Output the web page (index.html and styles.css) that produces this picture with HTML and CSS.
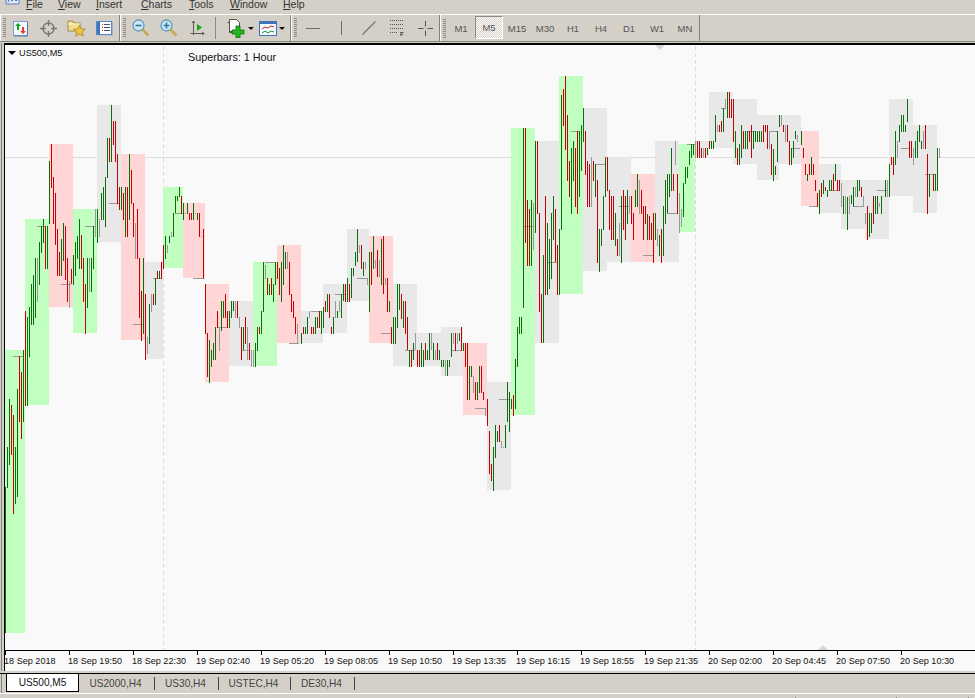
FILE: index.html
```html
<!DOCTYPE html>
<html lang="en">
<head>
    <meta charset="UTF-8">
    <title>US500,M5</title>
    <link rel="stylesheet" href="styles.css">
</head>
<body>
    <nav class="menubar">
        <svg class="app-icon" width="16" height="14" viewBox="0 0 16 14">
            <path d="M1 0h13v9H1z" fill="#dfe8f8" stroke="#5a7fc0"/>
            <path d="M3 7l2-4 2 3 2-4 2 4 2-2" fill="none" stroke="#3a64b0"/>
        </svg>
        <span class="menu-item menu-file"><u>F</u>ile</span>
        <span class="menu-item menu-view"><u>V</u>iew</span>
        <span class="menu-item menu-insert"><u>I</u>nsert</span>
        <span class="menu-item menu-charts"><u>C</u>harts</span>
        <span class="menu-item menu-tools"><u>T</u>ools</span>
        <span class="menu-item menu-window"><u>W</u>indow</span>
        <span class="menu-item menu-help"><u>H</u>elp</span>
    </nav>

    <div class="toolbar">
        <div class="tool-group group-main">
            <span class="grip"></span>
            <button class="tool" aria-label="New Chart">
                <svg width="17" height="17" viewBox="0 0 17 17">
                    <rect x="1.5" y="1.5" width="14" height="14" fill="#f4f8fe" stroke="#7d9fd0"/>
                    <path d="M15.5 2v14H2" fill="none" stroke="#4f78b4"/>
                    <path d="M6 3l3 3H7v4H5V6H3z" fill="#18a018"/>
                    <path d="M11 14l3-3h-2V7h-2v4H8z" fill="#e04028"/>
                </svg>
            </button>
            <button class="tool" aria-label="Crosshair">
                <svg width="17" height="17" viewBox="0 0 17 17" fill="none" stroke="#77756f">
                    <circle cx="8.5" cy="8.5" r="5.5" stroke-width="1.4"/>
                    <path d="M8.5 0v6M8.5 11v6M0 8.5h6M11 8.5h6" stroke-width="1.4"/>
                </svg>
            </button>
            <button class="tool" aria-label="Market Watch">
                <svg width="19" height="18" viewBox="0 0 19 18">
                    <path d="M1 2h5l1 2h6v8H1z" fill="#f4de8a" stroke="#9a8a50"/>
                    <path d="M1 5h12" stroke="#fff6c8"/>
                    <path d="M12.500 6l1.700 3.800 4.300.4-3.200 2.800 1 4.200-3.800-2.300-3.800 2.300 1-4.200-3.200-2.800 4.300-.4z" fill="#f0c040" stroke="#a08020" stroke-width=".7"/>
                </svg>
            </button>
            <button class="tool" aria-label="Navigator">
                <svg width="17" height="16" viewBox="0 0 17 16">
                    <rect x=".5" y="1.500" width="15" height="13" fill="#fff" stroke="#5c86c4"/>
                    <rect x="1" y="2" width="3" height="12" fill="#3f74c4"/>
                    <path d="M6 4.500h1M6 7.500h1M6 10.500h1" stroke="#c83020"/>
                    <path d="M8 4.500h6M8 7.500h6M8 10.500h6" stroke="#40506c"/>
                    <path d="M16.500 2v14H1" fill="none" stroke="#9db4d4"/>
                </svg>
            </button>
        </div>

        <div class="tool-group group-zoom">
            <span class="grip"></span>
            <button class="tool" aria-label="Zoom Out">
                <svg width="18" height="18" viewBox="0 0 18 18">
                    <circle cx="6.500" cy="6.500" r="5.500" fill="#cfe6f4" stroke="#5f9cc0" stroke-width="1.300"/>
                    <path d="M3.500 6.500h6" stroke="#2d77a8" stroke-width="1.600"/>
                    <path d="M10.500 10.500l6 6" stroke="#c8a850" stroke-width="2.600"/>
                </svg>
            </button>
            <button class="tool" aria-label="Zoom In">
                <svg width="18" height="18" viewBox="0 0 18 18">
                    <circle cx="6.500" cy="6.500" r="5.500" fill="#cfe6f4" stroke="#5f9cc0" stroke-width="1.300"/>
                    <path d="M3.500 6.500h6M6.500 3.500v6" stroke="#2d77a8" stroke-width="1.600"/>
                    <path d="M10.500 10.500l6 6" stroke="#c8a850" stroke-width="2.600"/>
                </svg>
            </button>
            <button class="tool" aria-label="Chart Shift">
                <svg width="15" height="17" viewBox="0 0 15 17">
                    <path d="M3.500 1v14M.500 13.500h14M2 3l1.500-2L5 3M12 12l2 1.500-2 1.500" fill="none" stroke="#5c5a54"/>
                    <path d="M7 4l5 3.500L7 11z" fill="#1aa51a"/>
                </svg>
            </button>
            <span class="tool-sep"></span>
            <button class="tool tool-menu" aria-label="New Order">
                <svg width="20" height="20" viewBox="0 0 20 20">
                    <path d="M3.500 1.500h7l3 3v9h-10z" fill="#fff" stroke="#55534e"/>
                    <path d="M1.500 4.500h2v10h3" fill="none" stroke="#55534e"/>
                    <path d="M10 8h4v4h4v4h-4v4h-4v-4H6v-4h4z" fill="#22b822" stroke="#0a6a0a" stroke-width=".8"/>
                </svg>
                <span class="drop-arrow"></span>
            </button>
            <button class="tool tool-menu" aria-label="Indicators">
                <svg width="18" height="15" viewBox="0 0 18 15">
                    <rect x=".5" y=".5" width="17" height="14" fill="#f4f8fe" stroke="#3f74b8"/>
                    <rect x="1" y="1" width="16" height="2" fill="#3f74b8"/>
                    <path d="M3 8l3-2 3 1 3-2 3 1" fill="none" stroke="#c03020"/>
                    <path d="M3 12l3-2 3 2 3-2 3 1" fill="none" stroke="#209030"/>
                </svg>
                <span class="drop-arrow"></span>
            </button>
        </div>

        <div class="tool-group group-lines">
            <span class="grip"></span>
            <button class="tool" aria-label="Horizontal Line">
                <svg width="14" height="3" viewBox="0 0 14 3"><path d="M0 1.500h14" stroke="#6e6c66"/></svg>
            </button>
            <button class="tool" aria-label="Vertical Line">
                <svg width="3" height="14" viewBox="0 0 3 14"><path d="M1.500 0v14" stroke="#6e6c66"/></svg>
            </button>
            <button class="tool" aria-label="Trendline">
                <svg width="14" height="14" viewBox="0 0 14 14"><path d="M.5 13.500l13-13" stroke="#77756f" stroke-width="1.200"/></svg>
            </button>
            <button class="tool" aria-label="Fibonacci">
                <svg width="14" height="16" viewBox="0 0 14 16">
                    <path d="M0 .500h13M0 4.500h13M0 8.500h13M0 12.500h8" stroke="#55534e" stroke-dasharray="1 1"/>
                    <text class="fib-mark" x="10" y="16">F</text>
                </svg>
            </button>
            <button class="tool" aria-label="Cursor">
                <svg width="15" height="15" viewBox="0 0 15 15"><path d="M0 7.500h5.500M9.500 7.500H15M7.500 0v5.500M7.500 9.500V15" stroke="#55534e"/><path d="M7 7h1v1H7z" fill="#b0aea8"/></svg>
            </button>
        </div>

        <div class="tool-group group-periods">
            <span class="grip grip-striped"></span>
            <button class="period">M1</button>
            <button class="period period-active">M5</button>
            <button class="period">M15</button>
            <button class="period">M30</button>
            <button class="period">H1</button>
            <button class="period">H4</button>
            <button class="period">D1</button>
            <button class="period">W1</button>
            <button class="period">MN</button>
        </div>
    </div>

    <main class="chart-window">
        <div class="chart-area">
            <svg id="chart" class="chart-svg" width="970" height="605" viewBox="5 45 970 605"></svg>
            <div class="chart-title"><span class="title-arrow"></span>US500,M5</div>
            <div class="chart-note">Superbars: 1 Hour</div>
            <span class="marker marker-top"></span>
            <span class="marker marker-bottom"></span>
        </div>
        <div class="time-axis">
            <div class="tick"><span>18 Sep 2018</span></div>
            <div class="tick"><span>18 Sep 19:50</span></div>
            <div class="tick"><span>18 Sep 22:30</span></div>
            <div class="tick"><span>19 Sep 02:40</span></div>
            <div class="tick"><span>19 Sep 05:20</span></div>
            <div class="tick"><span>19 Sep 08:05</span></div>
            <div class="tick"><span>19 Sep 10:50</span></div>
            <div class="tick"><span>19 Sep 13:35</span></div>
            <div class="tick"><span>19 Sep 16:15</span></div>
            <div class="tick"><span>19 Sep 18:55</span></div>
            <div class="tick"><span>19 Sep 21:35</span></div>
            <div class="tick"><span>20 Sep 02:00</span></div>
            <div class="tick"><span>20 Sep 04:45</span></div>
            <div class="tick"><span>20 Sep 07:50</span></div>
            <div class="tick"><span>20 Sep 10:30</span></div>
        </div>
    </main>

    <div class="tabs">
        <div class="tab tab-active">US500,M5</div>
        <div class="tab tab-us2000">US2000,H4</div>
        <div class="tab tab-us30">US30,H4</div>
        <div class="tab tab-ustec">USTEC,H4</div>
        <div class="tab tab-de30">DE30,H4</div>
    </div>

    <footer class="statusbar">
        <span class="status-cell status-main"></span>
        <span class="status-cell status-mid"></span>
        <span class="status-cell status-small"></span>
    </footer>

    <script src="chart.js"></script>
</body>
</html>
```

FILE: styles.css
```css
* {
    margin: 0;
    padding: 0;
    box-sizing: border-box;
}

body {
    width: 975px;
    height: 698px;
    overflow: hidden;
    display: flex;
    flex-direction: column;
    font-family: 'Liberation Sans', Arial, sans-serif;
    background: #d4d0c8;
    color: #222;
}

button {
    border: none;
    background: none;
    font-family: inherit;
}

/* menu, cut off by the top of the window */
.menubar {
    position: relative;
    height: 14px;
    flex: none;
    overflow: hidden;
    font-size: 10.500px;
}

.app-icon {
    position: absolute;
    left: 5px;
    top: -5px;
}

.menu-item {
    position: absolute;
    top: -3px;
    line-height: 14px;
    color: #333;
}

.menu-file { left: 26px; }
.menu-view { left: 58px; }
.menu-insert { left: 96px; }
.menu-charts { left: 141px; }
.menu-tools { left: 189px; }
.menu-window { left: 230px; }
.menu-help { left: 283px; }

/* toolbars */
.toolbar {
    display: flex;
    height: 28px;
    flex: none;
    border-top: 1px solid #fff;
    border-bottom: 1px solid #808080;
}

.tool-group {
    display: flex;
    align-items: center;
    border-right: 1px solid #808080;
    box-shadow: inset 1px 0 #fff;
    padding-left: 3px;
}

.group-main { width: 120px; }
.group-zoom { width: 171px; }
.group-lines { width: 149px; }
.group-periods { width: 260px; }

.grip {
    width: 3px;
    height: 20px;
    flex: none;
    background: repeating-linear-gradient(#8d8a83 0 1px, transparent 1px 2px);
}

.group-zoom .grip {
    margin-right: 1px;
}

.group-lines .grip {
    margin-right: 2px;
}

.grip-striped {
    height: 19px;
    margin-right: 1px;
}

.tool {
    width: 28px;
    height: 26px;
    flex: none;
    display: flex;
    align-items: center;
    justify-content: center;
}

.tool-sep {
    width: 1px;
    height: 22px;
    margin: 0 7px 0 4px;
    flex: none;
    background: #8d8a83;
}

.tool-menu {
    width: 33px;
    justify-content: flex-start;
    gap: 2px;
    padding-left: 3px;
}

.drop-arrow {
    width: 0;
    height: 0;
    border-left: 3px solid transparent;
    border-right: 3px solid transparent;
    border-top: 3px solid #111;
}

.fib-mark {
    font-size: 6px;
    font-weight: bold;
    fill: #333;
}

.period {
    width: 28px;
    height: 25px;
    flex: none;
    font-size: 9.500px;
    color: #555;
}

.period-active {
    height: 23px;
    margin: 0 0 1px;
    border: 1px solid #fff;
    border-top-color: #8d8a83;
    border-left-color: #8d8a83;
    background: repeating-conic-gradient(#fff 0 25%, #d4d0c8 0 50%) 0 0 / 2px 2px;
}

/* chart window */
.chart-window {
    flex: none;
    height: 628px;
    margin: 1px 0 0 4px;
    border-top: 2px solid #000;
    border-left: 1px solid #000;
    background: #f9f9f9;
    box-shadow: -2px 0 #d4d0c8, -3px 0 #808080;
}

.chart-area {
    position: relative;
    height: 606px;
    border-bottom: 1px solid #000;
}

.chart-svg {
    display: block;
}

.chart-title {
    position: absolute;
    left: 3px;
    top: 2px;
    display: flex;
    align-items: center;
    gap: 3px;
    font-size: 9.200px;
    line-height: 12px;
    color: #111;
}

.title-arrow {
    width: 0;
    height: 0;
    border-left: 4px solid transparent;
    border-right: 4px solid transparent;
    border-top: 4px solid #000;
}

.chart-note {
    position: absolute;
    left: 183px;
    top: 5px;
    font-size: 10.800px;
    line-height: 14px;
    color: #111;
}

.marker {
    position: absolute;
    width: 0;
    height: 0;
    border-left: 5px solid transparent;
    border-right: 5px solid transparent;
}

.marker-top {
    left: 650px;
    top: 0;
    border-top: 5px solid #d6d6d6;
}

.marker-bottom {
    left: 813px;
    bottom: 0;
    border-bottom: 5px solid #d6d6d6;
}

.time-axis {
    display: flex;
    height: 20px;
    overflow: hidden;
}

.tick {
    flex: 0 0 64px;
    font-size: 9.100px;
    color: #111;
    white-space: nowrap;
}

.tick::before {
    content: "";
    display: block;
    width: 1px;
    height: 4px;
    background: #000;
}

.tick span {
    display: block;
    margin: 1px 0 0 -1px;
    line-height: 11px;
}

/* symbol tabs */
.tabs {
    display: flex;
    height: 20px;
    flex: none;
    margin-top: 2px;
    padding-left: 6px;
    border-top: 1px solid #000;
    background: linear-gradient(#808080, #808080) 1px 0 / 1px 100% no-repeat;
    font-size: 10.100px;
    color: #444;
}

.tab {
    height: 13px;
    margin-top: 3px;
    padding-right: 2px;
    line-height: 13px;
    text-align: center;
    border-right: 1px solid #444;
}

.tab-active {
    width: 73px;
    height: 18px;
    margin-top: 0;
    padding-right: 0;
    line-height: 17px;
    background: #fff;
    color: #111;
    border: 1px solid #000;
    border-top: none;
}

.tab-us2000 { width: 76px; }
.tab-us30 { width: 64px; }
.tab-ustec { width: 72px; }
.tab-de30 { width: 64px; }

.statusbar {
    display: flex;
    flex: 1;
    border-top: 1px solid #fff;
    align-items: flex-end;
}

.status-cell {
    height: 1px;
    border-right: 1px solid #8d8a83;
}

.status-main { width: 796px; }
.status-mid { width: 101px; }
.status-small { width: 72px; }
```

FILE: chart.js
```js
// page coordinates, the svg viewBox lines up with the window
const G = '#0a6e0a', R = '#c40000', N = '#999999';
const GREEN = '#c0ffc0', PINK = '#ffd5d5', GREY = '#e8e8e8';

// superbars: left, right, top, bottom, colour
const boxes = [
    [5, 25, 350, 633, GREEN], [25, 49, 219, 405, GREEN], [49, 73, 144, 307, PINK],
    [73, 97, 209, 333, GREEN], [97, 121, 105, 242, GREY], [121, 145, 154, 340, PINK],
    [145, 163, 262, 359, GREY], [163, 183, 187, 268, GREEN], [183, 205, 203, 278, PINK],
    [205, 229, 284, 382, PINK], [229, 253, 301, 366, GREY], [253, 277, 262, 366, GREEN],
    [277, 301, 245, 343, PINK], [301, 323, 311, 343, GREY], [323, 347, 284, 333, GREY],
    [347, 369, 229, 301, GREY], [369, 393, 236, 343, PINK], [393, 417, 284, 366, GREY],
    [417, 441, 333, 366, GREY], [441, 463, 327, 376, GREY], [463, 487, 343, 415, PINK],
    [487, 511, 382, 490, GREY], [511, 535, 128, 415, GREEN], [535, 559, 141, 343, GREY],
    [559, 583, 76, 294, GREEN], [583, 607, 108, 271, GREY], [607, 631, 157, 262, GREY],
    [631, 655, 174, 262, PINK], [655, 679, 141, 262, GREY], [679, 695, 144, 232, GREEN],
    [695, 709, 141, 158, GREY], [709, 733, 92, 148, GREY], [733, 757, 99, 164, GREY],
    [757, 779, 115, 180, GREY], [779, 801, 115, 164, GREY], [801, 819, 131, 206, PINK],
    [819, 841, 164, 213, GREY], [841, 865, 180, 229, GREY], [865, 889, 180, 239, GREY],
    [889, 913, 99, 196, GREY], [913, 937, 125, 213, GREY]
];

// M5 bars: x, high, low, colour
const bars = [
    [5, 487, 633, G], [7, 447, 488, G], [9, 399, 465, G], [11, 405, 455, R], [13, 415, 514, R],
    [15, 447, 504, G], [17, 389, 497, G], [19, 356, 422, R], [21, 372, 439, R], [23, 350, 422, G],
    [25, 311, 406, R], [27, 317, 406, G], [29, 307, 357, G], [31, 284, 325, G], [33, 275, 325, G],
    [35, 258, 318, G], [37, 258, 302, N], [39, 242, 285, G], [41, 226, 253, G], [43, 219, 243, G],
    [45, 226, 269, R], [47, 226, 269, G], [49, 161, 224, G], [51, 144, 188, R], [53, 177, 224, R],
    [55, 193, 245, R], [57, 229, 276, R], [59, 252, 276, R], [61, 239, 276, G], [63, 223, 261, G],
    [65, 226, 280, R], [67, 258, 302, R], [69, 281, 308, N], [71, 269, 284, R], [73, 255, 285, G],
    [75, 242, 276, G], [77, 236, 259, G], [79, 219, 269, G], [81, 235, 269, R], [83, 258, 302, R],
    [85, 284, 334, R], [87, 258, 308, G], [89, 258, 292, N], [91, 258, 292, G], [93, 226, 269, G],
    [95, 209, 237, N], [97, 209, 243, G], [99, 219, 237, N], [101, 193, 220, G], [103, 187, 220, G],
    [105, 177, 227, G], [107, 138, 178, G], [109, 138, 162, R], [111, 105, 162, G], [113, 121, 145, R],
    [115, 121, 162, R], [117, 154, 204, R], [119, 187, 210, R], [121, 187, 210, G], [123, 193, 220, R],
    [125, 187, 237, G], [127, 187, 237, R], [129, 154, 220, G], [131, 170, 204, R], [133, 203, 237, R],
    [135, 223, 259, N], [137, 209, 259, R], [139, 258, 318, R], [141, 291, 341, R], [143, 258, 334, G],
    [145, 294, 360, R], [147, 337, 354, N], [149, 304, 344, G], [151, 294, 312, N], [153, 294, 305, R],
    [155, 278, 305, G], [157, 271, 279, R], [159, 271, 279, G], [161, 262, 279, R], [163, 245, 269, R],
    [165, 236, 259, G], [167, 245, 253, N], [169, 236, 243, G], [171, 232, 237, N], [173, 213, 237, G],
    [175, 196, 213, G], [177, 196, 201, G], [179, 187, 197, G], [181, 196, 214, R], [183, 203, 220, G],
    [185, 213, 214, N], [187, 203, 214, G], [189, 213, 220, R], [191, 213, 220, R], [193, 203, 220, G],
    [195, 213, 214, N], [197, 213, 220, G], [199, 213, 237, R], [201, 236, 237, N], [203, 229, 279, R],
    [205, 284, 334, R], [207, 333, 377, R], [209, 340, 383, G], [211, 350, 367, G], [213, 343, 360, G],
    [215, 327, 360, G], [217, 311, 328, R], [219, 328, 351, N], [221, 301, 331, G], [223, 301, 318, G],
    [225, 294, 318, R], [227, 311, 328, R], [229, 311, 328, G], [231, 301, 318, G], [233, 301, 311, G],
    [235, 301, 318, N], [237, 301, 318, R], [239, 317, 328, N], [241, 327, 360, R], [243, 327, 350, G],
    [245, 317, 344, R], [247, 327, 360, N], [249, 343, 360, R], [251, 350, 367, N], [253, 350, 367, N],
    [255, 343, 367, G], [257, 327, 351, G], [259, 327, 334, R], [261, 311, 334, G], [263, 262, 312, G],
    [265, 265, 279, N], [267, 278, 295, R], [269, 284, 295, G], [271, 278, 295, R], [273, 284, 302, G],
    [275, 262, 285, G], [277, 262, 279, R], [279, 268, 295, R], [281, 262, 302, G], [283, 245, 285, G],
    [285, 252, 269, G], [287, 252, 269, N], [289, 262, 295, R], [291, 294, 312, R], [293, 301, 318, R],
    [295, 317, 334, R], [297, 324, 343, N], [301, 333, 344, G], [303, 327, 334, R], [305, 327, 334, G],
    [307, 317, 334, G], [309, 311, 318, N], [311, 327, 334, R], [313, 327, 334, R], [315, 317, 334, G],
    [317, 317, 328, G], [319, 311, 328, R], [321, 311, 334, G], [323, 307, 328, G], [325, 301, 312, R],
    [327, 294, 312, G], [329, 294, 318, R], [331, 327, 334, R], [333, 317, 334, G], [335, 301, 318, N],
    [337, 311, 318, G], [339, 301, 312, N], [341, 294, 318, G], [343, 284, 301, G], [345, 284, 302, R],
    [347, 278, 302, G], [349, 284, 302, R], [351, 268, 298, G], [353, 268, 276, G], [355, 252, 266, G],
    [357, 229, 262, G], [359, 245, 253, N], [361, 245, 269, R], [363, 262, 276, G], [365, 262, 269, N],
    [367, 278, 285, N], [369, 252, 312, G], [371, 252, 285, R], [373, 236, 269, G], [375, 260, 268, N],
    [377, 250, 277, R], [379, 260, 277, N], [381, 239, 285, G], [383, 236, 294, R], [385, 278, 285, N],
    [387, 278, 312, R], [389, 301, 312, G], [391, 327, 344, R], [393, 317, 344, G], [395, 317, 344, G],
    [397, 284, 328, G], [399, 284, 310, G], [401, 294, 319, R], [403, 301, 328, G], [405, 301, 334, R],
    [407, 317, 350, R], [409, 350, 367, G], [411, 350, 367, R], [413, 343, 360, G], [415, 333, 350, N],
    [417, 350, 367, R], [419, 350, 367, R], [421, 343, 367, G], [423, 350, 367, G], [425, 343, 360, R],
    [427, 350, 360, G], [429, 333, 360, G], [431, 333, 350, N], [433, 343, 360, G], [435, 350, 360, N],
    [437, 343, 360, R], [439, 350, 360, G], [441, 360, 367, G], [443, 360, 367, G], [445, 360, 376, N],
    [447, 360, 376, G], [449, 360, 367, G], [451, 333, 357, G], [453, 333, 344, N], [455, 333, 351, R],
    [457, 333, 344, N], [459, 333, 341, G], [461, 327, 351, R], [463, 343, 351, G], [465, 343, 367, R],
    [467, 343, 400, R], [469, 366, 400, G], [471, 366, 377, G], [473, 376, 393, N], [475, 382, 400, R],
    [477, 382, 400, G], [479, 366, 393, G], [481, 366, 393, R], [483, 392, 400, R], [485, 408, 416, N],
    [487, 399, 426, R], [489, 431, 474, R], [491, 464, 481, R], [493, 447, 491, G], [495, 425, 458, G],
    [497, 431, 442, G], [499, 425, 442, R], [501, 441, 448, N], [503, 447, 448, N], [505, 425, 448, G],
    [507, 382, 422, G], [509, 392, 432, G], [511, 399, 409, G], [513, 395, 416, R], [515, 359, 409, G],
    [517, 327, 367, G], [519, 317, 334, G], [521, 317, 334, G], [523, 128, 308, G], [525, 128, 243, R],
    [527, 200, 266, R], [529, 209, 266, R], [531, 200, 266, G], [533, 203, 250, N], [535, 141, 233, G],
    [537, 141, 214, R], [539, 213, 312, R], [541, 294, 343, R], [543, 255, 343, G], [545, 196, 295, R],
    [547, 223, 295, G], [549, 239, 289, G], [551, 213, 279, G], [553, 196, 240, G], [555, 209, 262, R],
    [557, 245, 295, R], [559, 229, 295, G], [561, 95, 230, G], [563, 89, 126, R], [565, 76, 150, R],
    [567, 115, 181, R], [569, 161, 197, R], [571, 148, 214, G], [573, 141, 181, G], [575, 148, 207, R],
    [577, 131, 214, R], [579, 131, 197, G], [581, 125, 171, G], [583, 108, 142, G], [585, 131, 175, R],
    [587, 161, 207, R], [589, 164, 207, R], [591, 157, 207, N], [593, 161, 181, R], [595, 164, 197, G],
    [597, 180, 263, R], [599, 229, 272, G], [601, 229, 246, G], [603, 196, 230, G], [605, 157, 197, G],
    [607, 157, 191, R], [609, 190, 230, R], [611, 196, 240, R], [613, 196, 240, R], [615, 213, 246, G],
    [617, 239, 256, R], [619, 223, 256, N], [621, 196, 263, G], [623, 190, 230, R], [625, 196, 240, R],
    [627, 190, 224, G], [629, 196, 214, N], [631, 196, 224, R], [633, 213, 240, R], [635, 190, 207, G],
    [637, 174, 207, G], [639, 180, 214, N], [641, 190, 214, R], [643, 206, 240, R], [645, 206, 224, R],
    [647, 214, 240, G], [649, 216, 240, R], [651, 223, 240, R], [653, 213, 263, R], [655, 213, 240, G],
    [657, 229, 246, N], [659, 235, 256, G], [661, 229, 263, R], [663, 206, 256, G], [665, 180, 224, G],
    [667, 174, 213, G], [669, 174, 197, G], [671, 148, 191, G], [673, 174, 191, R], [675, 141, 165, N],
    [677, 174, 214, R], [679, 193, 233, N], [681, 209, 227, N], [683, 183, 217, G], [685, 167, 184, G],
    [687, 167, 178, G], [689, 151, 165, G], [691, 144, 158, G], [693, 144, 155, G], [695, 141, 158, N],
    [697, 141, 158, R], [699, 141, 158, R], [701, 148, 158, R], [703, 148, 158, N], [705, 148, 158, R],
    [707, 148, 155, G], [709, 141, 149, R], [711, 141, 149, G], [713, 141, 149, G], [715, 115, 142, G],
    [717, 125, 132, N], [719, 125, 132, R], [721, 121, 132, R], [723, 108, 132, G], [725, 99, 108, N],
    [727, 92, 118, G], [729, 92, 118, R], [731, 99, 118, R], [733, 99, 142, R], [735, 131, 158, G],
    [737, 148, 165, R], [739, 144, 165, G], [741, 125, 158, G], [743, 131, 149, R], [745, 131, 149, G],
    [747, 131, 149, G], [749, 131, 142, R], [751, 125, 158, R], [753, 131, 149, G], [755, 131, 142, G],
    [757, 131, 142, G], [759, 131, 142, G], [761, 131, 142, G], [763, 125, 142, R], [765, 125, 132, R],
    [767, 125, 149, R], [769, 131, 149, N], [771, 144, 175, R], [773, 149, 181, G], [775, 166, 175, G],
    [777, 131, 162, G], [779, 115, 127, G], [781, 115, 126, N], [783, 125, 132, R], [785, 125, 142, N],
    [787, 125, 142, R], [789, 141, 165, R], [791, 148, 165, G], [793, 141, 158, G], [795, 131, 139, G],
    [797, 135, 142, N], [801, 131, 145, G], [803, 148, 158, R], [805, 164, 175, R], [807, 174, 181, G],
    [809, 164, 175, R], [811, 157, 175, G], [813, 164, 175, R], [815, 180, 191, R], [817, 193, 207, R],
    [819, 190, 214, G], [821, 183, 197, R], [823, 180, 194, G], [825, 187, 191, R], [827, 190, 197, G],
    [829, 180, 191, G], [831, 180, 191, G], [833, 174, 191, R], [835, 164, 181, G], [837, 180, 191, R],
    [839, 180, 191, R], [841, 183, 207, N], [843, 196, 214, G], [845, 196, 214, N], [847, 197, 230, G],
    [849, 196, 214, N], [851, 195, 204, G], [853, 187, 207, G], [855, 187, 197, N], [857, 180, 197, G],
    [859, 180, 191, G], [861, 187, 197, R], [863, 196, 207, N], [865, 213, 224, N], [867, 206, 240, R],
    [869, 213, 237, G], [871, 213, 233, G], [873, 196, 224, R], [875, 196, 214, G], [877, 196, 214, G],
    [879, 203, 207, N], [881, 196, 214, G], [885, 180, 197, G], [887, 180, 197, N], [889, 164, 197, G],
    [891, 157, 165, R], [893, 157, 175, R], [895, 131, 165, G], [897, 141, 158, N], [899, 125, 142, G],
    [901, 115, 132, G], [903, 115, 132, G], [905, 125, 132, G], [907, 99, 122, G], [909, 141, 158, R],
    [911, 141, 158, R], [913, 148, 165, N], [915, 141, 158, G], [917, 131, 158, G], [919, 125, 142, G],
    [921, 141, 149, G], [923, 131, 149, N], [925, 125, 149, R], [927, 154, 214, R], [929, 174, 197, G],
    [933, 174, 191, R], [935, 174, 191, G], [937, 148, 191, G], [939, 148, 158, N]
];

// grey open ticks: x1, x2, y
const ticks = [
    [13, 23, 356], [37, 45, 226], [61, 71, 284], [85, 95, 226], [109, 119, 203], [133, 143, 324],
    [153, 161, 278], [175, 183, 213], [193, 203, 278], [217, 227, 327], [241, 249, 350], [265, 275, 262],
    [289, 299, 343], [311, 321, 311], [335, 345, 294], [357, 367, 278], [381, 391, 333], [405, 415, 350],
    [451, 461, 350], [475, 485, 408], [499, 510, 399], [524, 533, 226], [547, 557, 262], [571, 580, 131],
    [596, 605, 164], [619, 629, 206], [643, 653, 255], [667, 677, 213], [687, 695, 144], [721, 726, 108],
    [747, 755, 131], [769, 777, 131], [791, 800, 148], [809, 817, 206], [829, 839, 190], [854, 863, 206],
    [877, 887, 190], [901, 910, 148], [925, 935, 174]
];

const svg = document.getElementById('chart');
const NS = 'http://www.w3.org/2000/svg';

function addRect(x, y, w, h, fill) {
    const r = document.createElementNS(NS, 'rect');
    r.setAttribute('x', x);
    r.setAttribute('y', y);
    r.setAttribute('width', w);
    r.setAttribute('height', h);
    r.setAttribute('fill', fill);
    svg.appendChild(r);
}

// grid goes under the superbars
addRect(5, 157, 970, 1, '#dcdcdc');
[163, 695].forEach(x => {
    for (let y = 46; y < 650; y += 7) addRect(x, y, 1, 4, '#dcdcdc');
});

boxes.forEach(([l, r, t, b, c]) => addRect(l, t, r - l, b - t, c));
ticks.forEach(([a, b, y]) => addRect(a, y, b - a, 1, N));
bars.forEach(([x, t, b, c]) => addRect(x, t, 1, b - t, c));
```
